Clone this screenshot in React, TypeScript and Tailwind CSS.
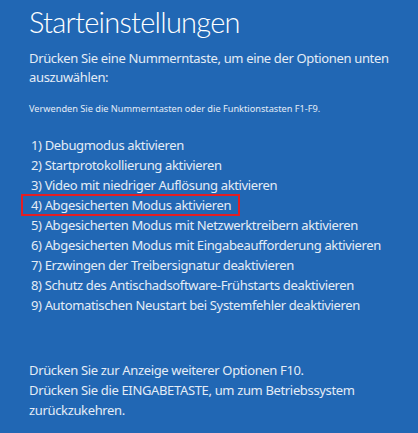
export default function App() {
  const options = [
    "1) Debugmodus aktivieren",
    "2) Startprotokollierung aktivieren",
    "3) Video mit niedriger Auflösung aktivieren",
    "4) Abgesicherten Modus aktivieren",
    "5) Abgesicherten Modus mit Netzwerktreibern aktivieren",
    "6) Abgesicherten Modus mit Eingabeaufforderung aktivieren",
    "7) Erzwingen der Treibersignatur deaktivieren",
    "8) Schutz des Antischadsoftware-Frühstarts deaktivieren",
    "9) Automatischen Neustart bei Systemfehler deaktivieren",
  ];

  return (
    <div className="w-[418px] h-[433px] overflow-hidden bg-[#2167b4] text-[#e4ecf6] font-['Noto_Sans',sans-serif] pl-[29px]">
      <h1 className="pt-[2px] font-['Lato',sans-serif] text-[29px] leading-[40px] font-light text-white tracking-[-0.75px]">
        Starteinstellungen
      </h1>

      <p className="mt-[7px] text-[13px] leading-[19px] tracking-[-0.35px] pr-[10px]">
        Drücken Sie eine Nummerntaste, um eine der Optionen unten auszuwählen:
      </p>

      <p className="mt-[15px] text-[9.2px] leading-[14px]">
        Verwenden Sie die Nummerntasten oder die Funktionstasten F1-F9.
      </p>

      <ul className="mt-[19px] flex flex-col">
        {options.map((o, i) => (
          <li
            key={o}
            className={
              i === 3
                ? "-ml-[8px] w-[219px] h-[22px] -my-[1px] border-2 border-[#e31e24] pl-[8px] whitespace-nowrap text-[13px] leading-[18px] tracking-[-0.35px]"
                : "text-[13px] leading-[20px] tracking-[-0.35px] pl-[2px] whitespace-nowrap"
            }
          >
            {o}
          </li>
        ))}
      </ul>

      <div className="mt-[45px] text-[13px] leading-[20px] tracking-[-0.35px] pr-[45px]">
        <p>Drücken Sie zur Anzeige weiterer Optionen F10.</p>
        <p>Drücken Sie die EINGABETASTE, um zum Betriebssystem zurückzukehren.</p>
      </div>
    </div>
  );
}
